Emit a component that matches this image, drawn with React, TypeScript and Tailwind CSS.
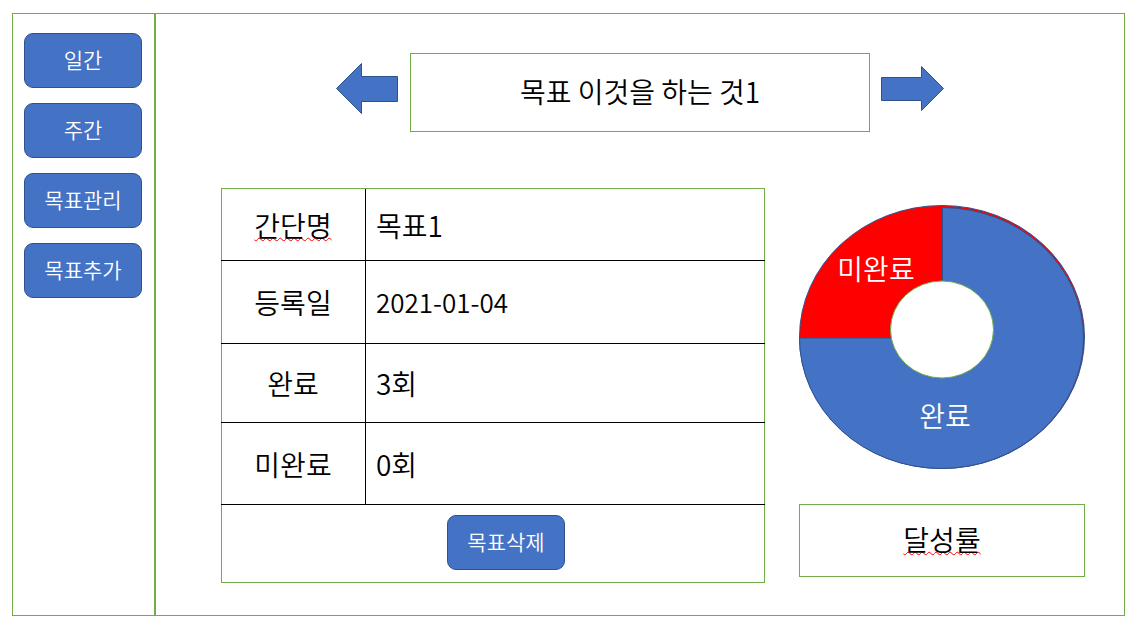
import React from "react";

type Row = { label: string; value: string; height: string; valueSize: string; flagged?: boolean };

const rows: Row[] = [
  { label: "간단명", value: "목표1", height: "h-[72px]", valueSize: "text-[28px]", flagged: true },
  { label: "등록일", value: "2021-01-04", height: "h-[83px]", valueSize: "text-[26px]" },
  { label: "완료", value: "3회", height: "h-[79px]", valueSize: "text-[28px]" },
  { label: "미완료", value: "0회", height: "h-[82px]", valueSize: "text-[28px]" },
];

const menu = ["일간", "주간", "목표관리", "목표추가"];

function ActionButton({ children }: { children: React.ReactNode }) {
  return (
    <button
      type="button"
      className="h-[55px] w-[118px] shrink-0 rounded-[9px] border border-[#2f528f] bg-[#4472c4] pb-1 text-[21px] leading-6 text-white"
    >
      {children}
    </button>
  );
}

function Flagged({ children }: { children: React.ReactNode }) {
  return (
    <span className="underline decoration-[#ff0000] decoration-wavy decoration-1 underline-offset-0 [text-decoration-skip-ink:none]">
      {children}
    </span>
  );
}

function CompletionChart() {
  return (
    <svg viewBox="0 0 286 264" className="block w-full" role="img" aria-label="달성률">
      <ellipse cx="143" cy="132" rx="142.5" ry="131.5" fill="#ff0000" stroke="#2f528f" />
      <path
        d="M143.5 2.5 A142 130.5 0 1 1 0.5 133 H143.5 Z"
        fill="#4472c4"
        stroke="#2f528f"
      />
      <ellipse cx="143" cy="124.5" rx="51.5" ry="48.5" fill="#ffffff" stroke="#70ad47" />
      <text x="77" y="75" textAnchor="middle" fill="#ffffff" className="text-[28px]">
        미완료
      </text>
      <text x="146" y="222" textAnchor="middle" fill="#ffffff" className="text-[28px]">
        완료
      </text>
    </svg>
  );
}

export default function App() {
  return (
    <div className="flex min-h-screen bg-white pt-[13px] pr-[15px] pb-[14px] pl-3 font-['Noto_Sans_CJK_KR',sans-serif] font-[350] text-black">
      <nav className="flex w-[142px] shrink-0 flex-col items-center gap-[15px] border border-r-0 border-[#70ad47] pt-[19px] pr-px">
        {menu.map((item) => (
          <ActionButton key={item}>{item}</ActionButton>
        ))}
      </nav>

      <main className="min-w-0 flex-1 border border-l-2 border-[#70ad47] pt-[39px] pr-[39px] pb-8 pl-[65px]">
        <header className="-ml-[26px] flex items-start justify-center">
          <button type="button" aria-label="이전 목표" className="flex h-[71px] shrink-0 items-center">
            <svg width="63" height="51" viewBox="0 0 63 51">
              <path
                d="M0.5 25.5 L25.5 0.5 V13.5 H61.5 V38.5 H25.5 V50.5 Z"
                fill="#4472c4"
                stroke="#2f528f"
              />
            </svg>
          </button>
          <h1 className="mx-[11px] flex h-[79px] w-full max-w-[460px] items-center justify-center border border-[#70ad47] pb-1 text-[28px] leading-8">
            목표 이것을 하는 것1
          </h1>
          <button type="button" aria-label="다음 목표" className="flex h-[71px] shrink-0 items-center">
            <svg width="63" height="45" viewBox="0 0 63 45">
              <path
                d="M62.5 22.5 L40.5 0.5 V11.5 H0.5 V34.5 H40.5 V44.5 Z"
                fill="#4472c4"
                stroke="#2f528f"
              />
            </svg>
          </button>
        </header>

        <div className="mt-14 grid grid-cols-[544fr_286fr] items-start gap-[34px]">
          <section className="border border-[#70ad47]">
            <table className="-mx-px w-[calc(100%+2px)] table-fixed border-separate border-spacing-0 leading-8">
              <tbody>
                {rows.map((row) => (
                  <tr key={row.label} className={row.height}>
                    <th
                      scope="row"
                      className="w-[145px] border-r border-b border-black p-0 text-center text-[28px] font-[350]"
                    >
                      {row.flagged ? <Flagged>{row.label}</Flagged> : row.label}
                    </th>
                    <td className={`border-b border-black py-0 pr-0 pl-[10px] ${row.valueSize}`}>{row.value}</td>
                  </tr>
                ))}
              </tbody>
            </table>
            <div className="flex justify-center pt-[10px] pb-3 pl-[26px]">
              <ActionButton>목표삭제</ActionButton>
            </div>
          </section>

          <aside className="flex flex-col gap-[35px] pt-[17px]">
            <CompletionChart />
            <div className="flex h-[73px] items-center justify-center border border-[#70ad47] pb-1 text-[28px] leading-8">
              <Flagged>달성률</Flagged>
            </div>
          </aside>
        </div>
      </main>
    </div>
  );
}
